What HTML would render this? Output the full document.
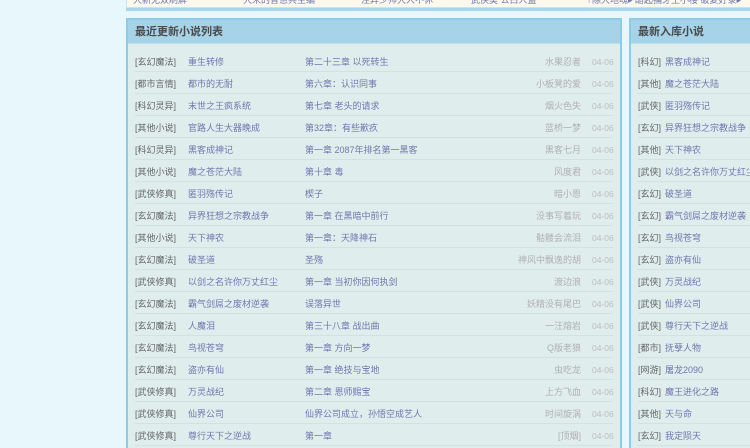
<!DOCTYPE html>
<html><head><meta charset="utf-8"><style>
*{margin:0;padding:0;box-sizing:border-box}
body{width:750px;height:442px;overflow:hidden;background:#e8f7fc;font-family:"Liberation Sans","Noto Sans CJK SC",sans-serif;font-size:9px;position:relative}
.top{position:absolute;left:126px;top:-4px;width:630px;height:12px;background:#fcf8ec;border:1px solid #c8e4f0;border-top:none}
.topband{position:absolute;left:126px;top:8px;width:630px;height:3px;background:#a8d6ec}
.top span{position:absolute;top:-3px;color:#7078b0;font-size:9px;white-space:nowrap}
.panel{position:absolute;top:18px;background:#dfeded;border:2px solid #8ecbe6;border-bottom:none;height:430px}
.hd{height:24px;background:#a7d3e8;font-weight:bold;color:#4a4a4a;font-size:11px;line-height:24px;padding-left:7px;border-bottom:1px solid #bcdde9}
.row{position:absolute;height:22px;line-height:22px;border-bottom:1px solid #d2e2e2;white-space:nowrap}
.c{color:#666}.n{color:#7276ae}.a{color:#b0b0b0;text-align:right}.d{color:#bcbcbc;font-size:8.5px}
.row span{position:absolute;top:1px}
</style></head><body>
<div class="top">
<span style="left:6px">大新无双刷解</span>
<span style="left:116px">大宋的智慧兵主编</span>
<span style="left:234px">注异少帅大人不休</span>
<span style="left:344px">武侠类 公白人盗</span>
<span style="left:461px;color:#aac">|</span>
<span style="left:465px">除大地魂▸ 醋起捕牙王小楼 破复好录▸</span>
</div>
<div class="topband"></div>
<div class="panel" style="left:126px;width:496px">
<div class="hd">最近更新小说列表</div>
<div id="L"></div>
</div>
<div class="panel" style="left:629px;width:130px">
<div class="hd">最新入库小说</div>
<div id="R"></div>
</div>
<script>
var L=[["玄幻魔法","重生转修","第二十三章 以死转生","水果忍者"],["都市言情","都市的无耐","第六章：认识同事","小板凳的爱"],["科幻灵异","末世之王疯系统","第七章 老头的请求","烟火色失"],["其他小说","官路人生大器晚成","第32章：有些歉疚","蓝桥一梦"],["科幻灵异","黑客成神记","第一章 2087年排名第一黑客","黑客七月"],["其他小说","魔之苍茫大陆","第十章 毒","风度君"],["武侠修真","匿羽殇传记","楔子","暗小恩"],["玄幻魔法","异界狂想之宗教战争","第一章 在黑暗中前行","没事写着玩"],["其他小说","天下神农","第一章：天降神石","骷髅会流泪"],["玄幻魔法","破圣道","圣殇","神风中飘逸的胡"],["武侠修真","以剑之名许你万丈红尘","第一章 当初你因何执剑","渡边浪"],["玄幻魔法","霸气剑屌之废材逆袭","误落异世","妖精没有尾巴"],["玄幻魔法","人魔泪","第三十八章 战出曲","一汪熔岩"],["玄幻魔法","鸟视苍穹","第一章 方向一梦","Q版老狼"],["玄幻魔法","盗亦有仙","第一章 绝技与宝地","虫吃龙"],["武侠修真","万灵战纪","第二章 恩师赐宝","上方飞血"],["武侠修真","仙界公司","仙界公司成立，孙悟空成艺人","时间旋涡"],["武侠修真","尊行天下之逆战","第一章","[顶烟]"]];
var R=[["科幻","黑客成神记"],["其他","魔之苍茫大陆"],["武侠","匿羽殇传记"],["玄幻","异界狂想之宗教战争"],["其他","天下神农"],["武侠","以剑之名许你万丈红尘"],["玄幻","破圣道"],["玄幻","霸气剑屌之废材逆袭"],["玄幻","鸟视苍穹"],["玄幻","盗亦有仙"],["武侠","万灵战纪"],["武侠","仙界公司"],["武侠","尊行天下之逆战"],["都市","抚孽人物"],["网游","屠龙2090"],["科幻","魔王进化之路"],["其他","天与命"],["玄幻","我定陨天"]];
var h="";L.forEach(function(r,i){h+='<div class="row" style="left:7px;width:478px;top:'+(30+i*22)+'px"><span class="c" style="left:0">['+r[0]+']</span><span class="n" style="left:53px">'+r[1]+'</span><span class="n" style="left:170px">'+r[2]+'</span><span class="a" style="right:32px">'+r[3]+'</span><span class="d" style="left:457px">04-06</span></div>'});
document.getElementById("L").innerHTML=h;
h="";R.forEach(function(r,i){h+='<div class="row" style="left:7px;width:120px;top:'+(30+i*22)+'px"><span class="c" style="left:0">['+r[0]+']</span><span class="n" style="left:27px">'+r[1]+'</span></div>'});
document.getElementById("R").innerHTML=h;
</script>
</body></html>
